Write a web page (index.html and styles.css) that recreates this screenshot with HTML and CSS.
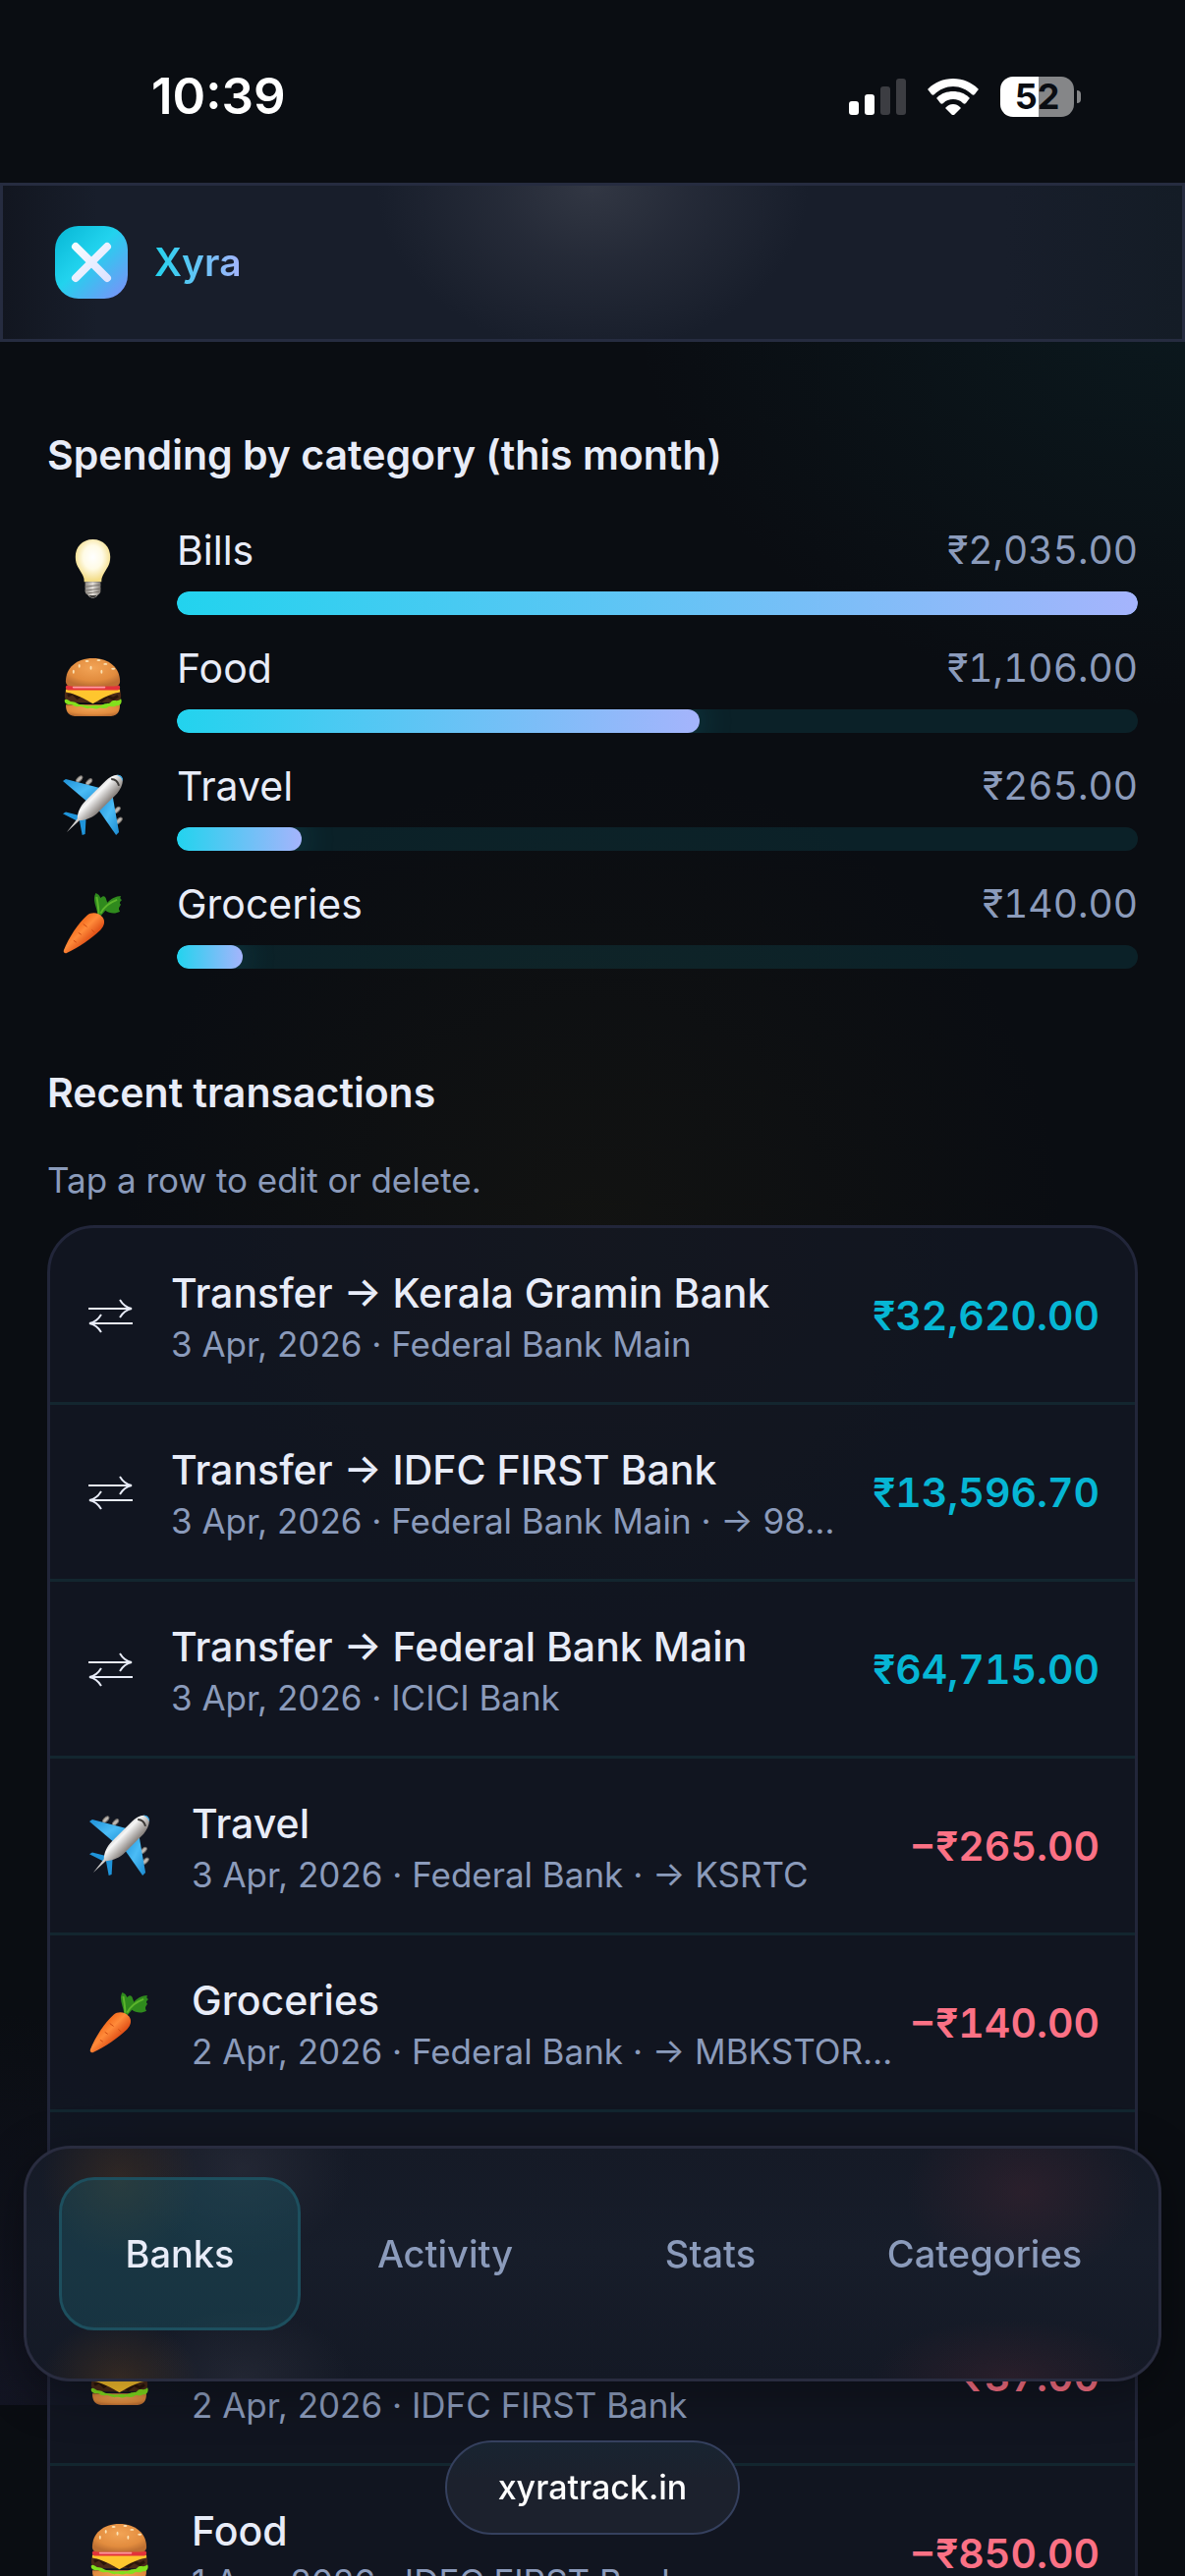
FILE: index.html
```html
<!DOCTYPE html>
<html lang="en">
<head>
  <meta charset="UTF-8" />
  <meta name="viewport" content="width=device-width, initial-scale=1.0"/>
  <title>Xyra</title>
  <link rel="stylesheet" href="styles.css">
</head>
<body>
  <!-- shared icons -->
  <svg class="defs" width="0" height="0" aria-hidden="true">
    <defs>
      <radialGradient id="bulbGlow" cx="50%" cy="42%" r="55%">
        <stop offset="0" stop-color="#ffffff"/>
        <stop offset=".5" stop-color="#fffbe6"/>
        <stop offset="1" stop-color="#f3dc86"/>
      </radialGradient>
      <linearGradient id="bulbBase" x1="0" x2="1">
        <stop offset="0" stop-color="#8f8a84"/>
        <stop offset=".5" stop-color="#e4e0da"/>
        <stop offset="1" stop-color="#7d7872"/>
      </linearGradient>
      <radialGradient id="bun" cx="50%" cy="35%" r="65%">
        <stop offset="0" stop-color="#f2a456"/>
        <stop offset=".7" stop-color="#e28c3e"/>
        <stop offset="1" stop-color="#bd6f32"/>
      </radialGradient>
      <linearGradient id="planeBody" x1=".3" y1=".3" x2=".6" y2=".6">
        <stop offset="0" stop-color="#a9a9a9"/>
        <stop offset=".45" stop-color="#f7f7f7"/>
        <stop offset="1" stop-color="#8a8480"/>
      </linearGradient>
      <linearGradient id="planeWing" x1="0" y1="0" x2="1" y2="1">
        <stop offset="0" stop-color="#1d8fd6"/>
        <stop offset=".5" stop-color="#4bbcf6"/>
        <stop offset="1" stop-color="#1b8ad0"/>
      </linearGradient>
      <linearGradient id="carrotBody" x1=".3" y1=".3" x2=".7" y2=".7">
        <stop offset="0" stop-color="#f36a1c"/>
        <stop offset=".4" stop-color="#ff8b3a"/>
        <stop offset="1" stop-color="#d9430f"/>
      </linearGradient>

      <symbol id="bulb" viewBox="0 0 64 64">
        <path d="M32 1C21 1 14 9 14 19c0 9 4 12 7 18 2 4 2 5 2 8h18c0-3 0-4 2-8 3-6 7-9 7-18C50 9 43 1 32 1z" fill="url(#bulbGlow)"/>
        <path d="M24 45h16v10c0 2-3 3-4 5-1 2-7 2-8 0-1-2-4-3-4-5z" fill="url(#bulbBase)"/>
        <path d="M24 50l16-2M24 54l16-2M25 57l14-2" stroke="#77716b" stroke-width="1" fill="none"/>
        <path d="M28 59h8c-1 3-7 3-8 0z" fill="#3e3c3a"/>
      </symbol>

      <symbol id="burger" viewBox="0 0 64 64">
        <path d="M4 50c0 9 4 12 12 12h32c8 0 12-3 12-12z" fill="url(#bun)"/>
        <path d="M4 35h56c2 5 1 10-1 13H5c-2-3-3-8-1-13z" fill="#4b2a18"/>
        <path d="M6 41l5-3 5 5 6-4 5 6 8-2 6 3 6-5 6 3 5-3" stroke="#2b150b" stroke-width="3" fill="none"/>
        <path d="M3 45c3-2 4 2 8 2s5 3 9 3 6 2 11 1 7 1 11-1 6 0 9-3 6 1 10-3c2 4-1 8-5 7-3 3-6-1-9 2-4 2-7-1-10 1-4 1-6-1-10 0-4 0-6-3-10-2-4 1-6-3-9-2-4 0-6-3-5-5z" fill="#83e01d"/>
        <path d="M4 34h56v3c-6 1-14 4-19 7l-9 5-9-5C18 41 10 38 4 37z" fill="#ffc62e"/>
        <path d="M5 30h54c2 2 1 4-1 5H6c-2-1-3-3-1-5z" fill="#e3333a"/>
        <path d="M12 32h32" stroke="#ff9aa0" stroke-width="2" stroke-linecap="round"/>
        <path d="M4 26C4 12 15 2 32 2s28 10 28 24c0 4-3 5-6 5H10c-3 0-6-1-6-5z" fill="url(#bun)"/>
        <g fill="#fbe2b4">
          <ellipse cx="18" cy="10" rx="1" ry="2"/><ellipse cx="26" cy="5" rx="2" ry="1"/>
          <ellipse cx="30" cy="12" rx="1" ry="2"/><ellipse cx="38" cy="4" rx="2" ry="1"/>
          <ellipse cx="41" cy="16" rx="1" ry="2"/><ellipse cx="45" cy="8" rx="2" ry="1"/>
          <ellipse cx="53" cy="13" rx="2" ry="1"/><ellipse cx="12" cy="16" rx="1" ry="2"/>
        </g>
      </symbol>

      <symbol id="plane" viewBox="0 0 64 64">
        <g fill="#bdb8b2" stroke="#77716c" stroke-width="1">
          <ellipse cx="18" cy="5" rx="2" ry="4" transform="rotate(45 18 5)"/>
          <ellipse cx="28" cy="8" rx="2" ry="4" transform="rotate(45 28 8)"/>
          <ellipse cx="57" cy="37" rx="2" ry="4" transform="rotate(45 57 37)"/>
          <ellipse cx="59" cy="48" rx="2" ry="4" transform="rotate(45 59 48)"/>
        </g>
        <path d="M1 7l3-2 38 10-14 15z" fill="url(#planeWing)"/>
        <path d="M38 37l14-17 7 40-3 3z" fill="url(#planeWing)"/>
        <path d="M1 41l3-2 15 4-4 5zM18 47l7-3-1 18-3 1z" fill="#1f94da"/>
        <path d="M61 2c4 4 1 12-4 18L36 41c-6 5-13 7-18 7L5 60l11-14c0-6 3-13 8-18L45 7c5-5 12-8 16-5z" fill="url(#planeBody)"/>
        <path d="M57 1c3-1 7 3 6 6-1-3-3-5-6-6z" fill="#2da7ea"/>
        <path d="M51 5c4 0 7 3 8 7" stroke="#3b3835" stroke-width="2" fill="none"/>
      </symbol>

      <symbol id="carrot" viewBox="0 0 64 64">
        <path d="M37 23C36 15 31 8 35 1c3 1 4 3 5 5 3-3 5-2 6 2l1 3c3-4 9-7 14-7-1 2-1 3 1 4-2 2-3 3-1 5-2 3-3 4-1 7-5 3-11 2-15-1l-5 6z" fill="#2f8a1d"/>
        <path d="M40 22c3-6 9-11 17-14M38 22c0-6-1-11-2-17" stroke="#5cb52c" stroke-width="2" fill="none"/>
        <path d="M26 24c5-4 12-3 16 2 3 4 2 9-2 13C31 48 17 57 5 63c-2 1-4-1-3-3 5-13 15-28 24-36z" fill="url(#carrotBody)"/>
        <path d="M22 33l4 3M17 42l3 2M31 39l3 3M12 50l3 2" stroke="#cf4a12" stroke-width="1"/>
      </symbol>

      <symbol id="transfer" viewBox="0 0 45 36">
        <path d="M0 11h44M32 2c3 5 7 8 12 9-5 1-9 4-12 9M45 26H1M13 17C10 22 6 25 1 26c5 1 9 4 12 9" fill="none" stroke="#e8ecf8" stroke-width="2"/>
      </symbol>
    </defs>
  </svg>

  <div class="status-bar">
    <span class="time">10:39</span>
    <div class="status-icons">
      <svg width="58" height="38" viewBox="0 0 58 38" aria-label="Signal">
        <rect x="0" y="24" width="10" height="14" rx="3" fill="#fff"/>
        <rect x="16" y="17" width="10" height="21" rx="3" fill="#fff"/>
        <rect x="32" y="9" width="10" height="29" rx="3" fill="#3c3d42"/>
        <rect x="48" y="1" width="10" height="37" rx="3" fill="#3c3d42"/>
      </svg>
      <svg width="52" height="38" viewBox="0 0 52 38" aria-label="Wi-Fi">
        <path d="M26 1C16 1 7 5 1 11c-1 1-1 1 0 2l3 4c1 1 2 1 3 0 5-5 12-8 19-8s14 3 19 8c1 1 2 1 3 0l3-4c1-1 1-1 0-2C45 5 36 1 26 1z" fill="#fff"/>
        <path d="M26 14c-6 0-12 2-16 6-1 1-1 1 0 2l3 4c1 1 2 1 3 0 3-3 6-4 10-4s7 1 10 4c1 1 2 1 3 0l3-4c1-1 1-1 0-2-4-4-10-6-16-6z" fill="#fff"/>
        <path d="M26 27c-3 0-5 1-7 3-1 1-1 1 0 2l6 6c1 1 1 1 2 0l6-6c1-1 1-1 0-2-2-2-4-3-7-3z" fill="#fff"/>
      </svg>
      <div class="battery">52</div>
    </div>
  </div>

  <header class="top-bar">
    <svg class="logo" viewBox="0 0 74 74" aria-hidden="true">
      <defs>
        <linearGradient id="logoBg" x1="0" y1="0" x2="1" y2="1">
          <stop offset="0" stop-color="#06b6d4"/>
          <stop offset=".45" stop-color="#22d3ee"/>
          <stop offset="1" stop-color="#818cf8"/>
        </linearGradient>
        <linearGradient id="logoX" x1="0" y1="0" x2="1" y2="1">
          <stop offset="0" stop-color="#f5fbff"/>
          <stop offset="1" stop-color="#dfe4ff"/>
        </linearGradient>
      </defs>
      <rect width="74" height="74" rx="24" fill="url(#logoBg)"/>
      <path d="M21 21l32 32M53 21L21 53" stroke="url(#logoX)" stroke-width="8" stroke-linecap="round"/>
    </svg>
    <span class="brand">Xyra</span>
  </header>

  <main>
    <section>
      <h2>Spending by category (this month)</h2>
      <ul class="categories">
        <li>
          <svg class="emoji"><use href="#bulb"/></svg>
          <div class="category">
            <div class="category-head"><span>Bills</span><span class="sum">₹2,035.00</span></div>
            <div class="track"><div class="fill" style="width: 100%"></div></div>
          </div>
        </li>
        <li>
          <svg class="emoji"><use href="#burger"/></svg>
          <div class="category">
            <div class="category-head"><span>Food</span><span class="sum">₹1,106.00</span></div>
            <div class="track"><div class="fill" style="width: 54.35%"></div></div>
          </div>
        </li>
        <li>
          <svg class="emoji"><use href="#plane"/></svg>
          <div class="category">
            <div class="category-head"><span>Travel</span><span class="sum">₹265.00</span></div>
            <div class="track"><div class="fill" style="width: 13.02%"></div></div>
          </div>
        </li>
        <li>
          <svg class="emoji"><use href="#carrot"/></svg>
          <div class="category">
            <div class="category-head"><span>Groceries</span><span class="sum">₹140.00</span></div>
            <div class="track"><div class="fill" style="width: 6.88%"></div></div>
          </div>
        </li>
      </ul>
    </section>

    <section class="recent">
      <h2>Recent transactions</h2>
      <p class="hint">Tap a row to edit or delete.</p>
      <div class="card">
        <button type="button" class="row">
          <svg class="swap"><use href="#transfer"/></svg>
          <span class="info">
            <span class="title">Transfer → Kerala Gramin Bank</span>
            <span class="meta">3 Apr, 2026 · Federal Bank Main</span>
          </span>
          <span class="amount">₹32,620.00</span>
        </button>
        <button type="button" class="row">
          <svg class="swap"><use href="#transfer"/></svg>
          <span class="info">
            <span class="title">Transfer → IDFC FIRST Bank</span>
            <span class="meta">3 Apr, 2026 · Federal Bank Main · → 98…</span>
          </span>
          <span class="amount">₹13,596.70</span>
        </button>
        <button type="button" class="row">
          <svg class="swap"><use href="#transfer"/></svg>
          <span class="info">
            <span class="title">Transfer → Federal Bank Main</span>
            <span class="meta">3 Apr, 2026 · ICICI Bank</span>
          </span>
          <span class="amount">₹64,715.00</span>
        </button>
        <button type="button" class="row">
          <svg class="emoji"><use href="#plane"/></svg>
          <span class="info">
            <span class="title">Travel</span>
            <span class="meta">3 Apr, 2026 · Federal Bank · → KSRTC</span>
          </span>
          <span class="amount spent">−₹265.00</span>
        </button>
        <button type="button" class="row">
          <svg class="emoji"><use href="#carrot"/></svg>
          <span class="info">
            <span class="title">Groceries</span>
            <span class="meta">2 Apr, 2026 · Federal Bank · → MBKSTOR…</span>
          </span>
          <span class="amount spent">−₹140.00</span>
        </button>
        <div class="row empty"></div>
        <button type="button" class="row">
          <svg class="emoji"><use href="#burger"/></svg>
          <span class="info">
            <span class="title">&nbsp;</span>
            <span class="meta">2 Apr, 2026 · IDFC FIRST Bank</span>
          </span>
          <span class="amount spent">−₹37.00</span>
        </button>
        <button type="button" class="row">
          <svg class="emoji"><use href="#burger"/></svg>
          <span class="info">
            <span class="title">Food</span>
            <span class="meta">1 Apr, 2026 · IDFC FIRST Bank</span>
          </span>
          <span class="amount spent">−₹850.00</span>
        </button>
      </div>
    </section>
  </main>

  <nav class="tabs">
    <button type="button" class="tab active">Banks</button>
    <button type="button" class="tab">Activity</button>
    <button type="button" class="tab">Stats</button>
    <button type="button" class="tab">Categories</button>
  </nav>

  <a class="site-pill" href="#">xyratrack.in</a>
</body>
</html>
```

FILE: styles.css
```css
* {
  box-sizing: border-box;
}
body {
  margin: 0;
  height: 100vh;
  overflow: hidden;
  display: flex;
  flex-direction: column;
  font-family: Inter, "Liberation Sans", sans-serif;
  font-size: 41px;
  line-height: 54px;
  color: #e8ecf8;
  background:
    radial-gradient(circle at 50% 48%, rgba(50, 42, 16, 0.2), transparent 480px),
    radial-gradient(ellipse 560px 420px at 100% 300px, rgba(14, 60, 66, 0.25), transparent),
    radial-gradient(ellipse 240px 400px at 0 100%, rgba(36, 36, 66, 0.35), transparent) 0 0 / 100% calc(100% - 174px) no-repeat,
    #0a0d12;
}
button {
  font: inherit;
  color: inherit;
  background: none;
  border: 0;
}
.defs {
  position: absolute;
}

/* status bar */
.status-bar {
  flex: none;
  height: 186px;
  padding: 10px 106px 0 154px;
  display: flex;
  align-items: center;
  justify-content: space-between;
  background: #0a0d12;
  color: #fff;
}
.time {
  font-size: 51px;
  font-weight: 600;
}
.status-icons {
  display: flex;
  align-items: center;
  gap: 22px;
}
.battery {
  position: relative;
  margin-right: 7px;
  width: 75px;
  height: 41px;
  border-radius: 13px;
  background: linear-gradient(90deg, #fff 52%, #858688 52%);
  color: #0a0d12;
  font-size: 36px;
  font-weight: 700;
  line-height: 41px;
  text-align: center;
}
.battery::after {
  content: "";
  position: absolute;
  right: -7px;
  top: 14px;
  width: 4px;
  height: 13px;
  border-radius: 0 4px 4px 0;
  background: #858688;
}

/* header */
.top-bar {
  flex: none;
  height: 162px;
  padding: 0 53px;
  display: flex;
  align-items: center;
  gap: 27px;
  border: 3px solid #262c40;
  background:
    radial-gradient(ellipse 220px 170px at 50% 0, rgba(76, 80, 92, 0.5), rgba(66, 70, 84, 0.3) 45%, transparent),
    linear-gradient(90deg, #121620, #181e2b 8%, #181e2b 85%, #141c26);
}
.logo {
  width: 74px;
  height: 74px;
}
.brand {
  font-size: 39px;
  font-weight: 600;
  background: linear-gradient(90deg, #22d3ee, #a5b4fc);
  -webkit-background-clip: text;
  background-clip: text;
  color: transparent;
}

main {
  flex: 1;
  min-height: 0;
  padding: 88px 48px 0;
}
h2 {
  margin: 0;
  font-size: 41px;
  font-weight: 600;
}

/* spending */
.categories {
  list-style: none;
  margin: 43px 0 0;
  padding: 0;
  display: grid;
  gap: 27px;
}
.categories li {
  display: flex;
  align-items: center;
  gap: 42px;
}
.categories .emoji {
  margin: 0 12px 0 15px;
}
.emoji {
  flex: none;
  width: 63px;
  height: 63px;
}
.category {
  flex: 1;
}
.category-head {
  display: flex;
  justify-content: space-between;
  margin-bottom: 15px;
}
.sum {
  font-size: 39px;
  color: #8b9bbb;
  font-variant-numeric: tabular-nums;
}
.track {
  height: 24px;
  border-radius: 12px;
  overflow: hidden;
  background: rgba(34, 211, 238, 0.1);
}
.fill {
  height: 100%;
  border-radius: 12px;
  background: linear-gradient(90deg, #22d3ee, #a5b4fc);
  box-shadow: 0 0 36px rgba(34, 211, 238, 0.25);
}

/* transactions */
.recent {
  margin-top: 99px;
}
.hint {
  margin: 38px 0 22px;
  font-size: 35px;
  line-height: 48px;
  color: #8b9bbb;
}
.card {
  border: 3px solid #22263a;
  border-radius: 48px;
  overflow: hidden;
  background: rgba(22, 27, 42, 0.6);
}
.row {
  width: 100%;
  padding: 36px 36px 36px 39px;
  display: flex;
  align-items: center;
  gap: 42px;
  text-align: left;
  border-bottom: 3px solid #13262f;
}
.row:last-child {
  border-bottom: 0;
}
.empty {
  height: 180px;
}
.swap {
  flex: none;
  width: 45px;
  height: 36px;
  margin-right: -3px;
}
.info {
  flex: 1;
  min-width: 0;
}
.title,
.meta {
  display: block;
  white-space: nowrap;
  overflow: hidden;
  text-overflow: ellipsis;
}
.title {
  font-weight: 500;
  line-height: 60px;
}
.meta {
  font-size: 35px;
  line-height: 45px;
  color: #8b9bbb;
}
.amount {
  margin-left: -30px;
  font-weight: 600;
  color: #06b6d4;
  font-variant-numeric: tabular-nums;
}
.spent {
  color: #fb7185;
}

/* bottom tabs */
.tabs {
  position: fixed;
  left: 24px;
  right: 24px;
  bottom: 198px;
  height: 240px;
  padding: 29px 33px;
  display: grid;
  grid-template-columns: 41fr 45fr 41fr 48fr;
  gap: 12px;
  align-items: start;
  border: 3px solid #292c3f;
  border-radius: 48px;
  background:
    radial-gradient(ellipse 80px 80px at 95px 32px, rgba(110, 70, 30, 0.3), transparent),
    radial-gradient(ellipse 80px 60px at 95px 100%, rgba(110, 70, 30, 0.35), transparent),
    radial-gradient(ellipse 110px 90px at 220px 20px, rgba(60, 62, 76, 0.35), transparent),
    radial-gradient(ellipse 110px 70px at 220px 100%, rgba(60, 62, 76, 0.35), transparent),
    radial-gradient(ellipse 120px 90px at 1015px 44px, rgba(80, 40, 52, 0.35), transparent),
    radial-gradient(ellipse 140px 60px at 1000px 100%, rgba(80, 40, 52, 0.35), transparent),
    linear-gradient(#151a26, #171d2a 45%, #141925);
  box-shadow: 0 12px 48px rgba(0, 0, 0, 0.35);
}
.tab {
  height: 156px;
  padding: 0;
  font-size: 38px;
  font-weight: 500;
  color: #8b9bbb;
  border-radius: 36px;
}
.active {
  color: #e8ecf8;
  border: 3px solid #1d4f5e;
  background: rgba(28, 100, 115, 0.35);
}

.site-pill {
  position: fixed;
  left: 50%;
  bottom: 42px;
  transform: translateX(-50%);
  width: 300px;
  height: 96px;
  border: 2px solid #35405e;
  border-radius: 48px;
  background: linear-gradient(#182431, #1c212d 40%);
  color: #fff;
  font-size: 34px;
  font-weight: 500;
  line-height: 92px;
  text-align: center;
  text-decoration: none;
}
```
